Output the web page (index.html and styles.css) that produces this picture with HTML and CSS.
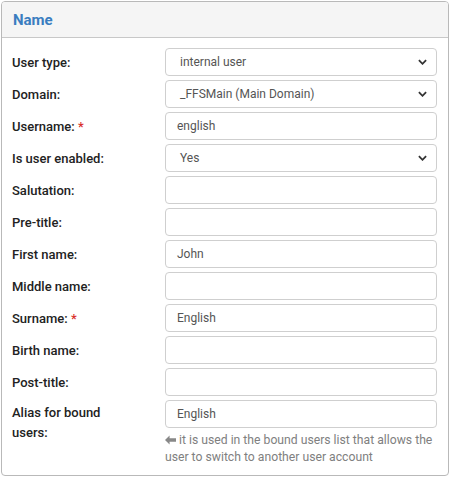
FILE: index.html
```html
<!DOCTYPE html>
<html>
<head>
<meta charset="utf-8">
<link rel="stylesheet" href="styles.css">
</head>
<body>
<div class="panel">
  <div class="panel-head">Name</div>
  <div class="panel-body">
    <div class="row"><label class="lbl">User type:</label><div class="ctl select"><span>internal user</span><svg class="chev" viewBox="0 0 10 6" width="9" height="6"><path d="M1 1 L5 5 L9 1" fill="none" stroke="#333" stroke-width="2"/></svg></div></div>
    <div class="row"><label class="lbl">Domain:</label><div class="ctl select"><span>_FFSMain (Main Domain)</span><svg class="chev" viewBox="0 0 10 6" width="9" height="6"><path d="M1 1 L5 5 L9 1" fill="none" stroke="#333" stroke-width="2"/></svg></div></div>
    <div class="row"><label class="lbl">Username: <span class="req">*</span></label><div class="ctl input"><span>english</span></div></div>
    <div class="row"><label class="lbl">Is user enabled:</label><div class="ctl select"><span>Yes</span><svg class="chev" viewBox="0 0 10 6" width="9" height="6"><path d="M1 1 L5 5 L9 1" fill="none" stroke="#333" stroke-width="2"/></svg></div></div>
    <div class="row"><label class="lbl">Salutation:</label><div class="ctl input"></div></div>
    <div class="row"><label class="lbl">Pre-title:</label><div class="ctl input"></div></div>
    <div class="row"><label class="lbl">First name:</label><div class="ctl input"><span>John</span></div></div>
    <div class="row"><label class="lbl">Middle name:</label><div class="ctl input"></div></div>
    <div class="row"><label class="lbl">Surname: <span class="req">*</span></label><div class="ctl input"><span>English</span></div></div>
    <div class="row"><label class="lbl">Birth name:</label><div class="ctl input"></div></div>
    <div class="row"><label class="lbl">Post-title:</label><div class="ctl input"></div></div>
    <div class="row top"><label class="lbl wrap">Alias for bound users:</label>
      <div class="col">
        <div class="ctl input"><span>English</span></div>
        <div class="help"><svg class="arrow" viewBox="0 0 12 10" width="11" height="10"><path d="M0 5 L5 0 L5 3 L12 3 L12 7 L5 7 L5 10 Z" fill="#888"/></svg> it is used in the bound users list that allows the user to switch to another user account</div>
      </div>
    </div>
  </div>
</div>
</body>
</html>
```
FILE: styles.css
```css
* { box-sizing: border-box; }
html, body { margin: 0; padding: 0; background: #fff; }
body { padding: 1px; font-family: Roboto, "Liberation Sans", Arial, sans-serif; }
.panel {
  width: 448px;
  height: 475px;
  border: 1px solid #b9b9b9;
  border-radius: 4px;
  overflow: hidden;
}
.panel-head {
  height: 36px;
  background: #f5f5f5;
  border-bottom: 1px solid #c8c8c8;
  padding: 0 11px;
  display: flex;
  align-items: center;
  color: #3a7dc0;
  font-weight: 700;
  font-size: 15px;
}
.panel-body {
  padding: 10px 11px 8px 10px;
  display: flex;
  flex-direction: column;
  gap: 4px;
}
.row { display: flex; align-items: center; }
.row.top { align-items: flex-start; }
.lbl {
  width: 153px;
  flex: none;
  font-size: 13px;
  font-weight: 500;
  color: #222;
  padding-right: 14px;
}
.lbl.wrap { line-height: 20px; padding-top: 3px; padding-right: 50px; }
.req { color: #d9302c; }
.col { flex: 1; display: flex; flex-direction: column; }
.ctl {
  flex: 1;
  height: 28px;
  border: 1px solid #cfcfcf;
  border-radius: 4px;
  display: flex;
  align-items: center;
  font-size: 12px;
  color: #555;
  padding: 0 11px;
}
.col .ctl { flex: none; }
.select { padding-left: 14px; padding-right: 9px; justify-content: space-between; }
.help {
  margin-top: 4px;
  font-size: 12.2px;
  line-height: 17px;
  color: #808080;
}
.arrow { vertical-align: -1px; }
```
